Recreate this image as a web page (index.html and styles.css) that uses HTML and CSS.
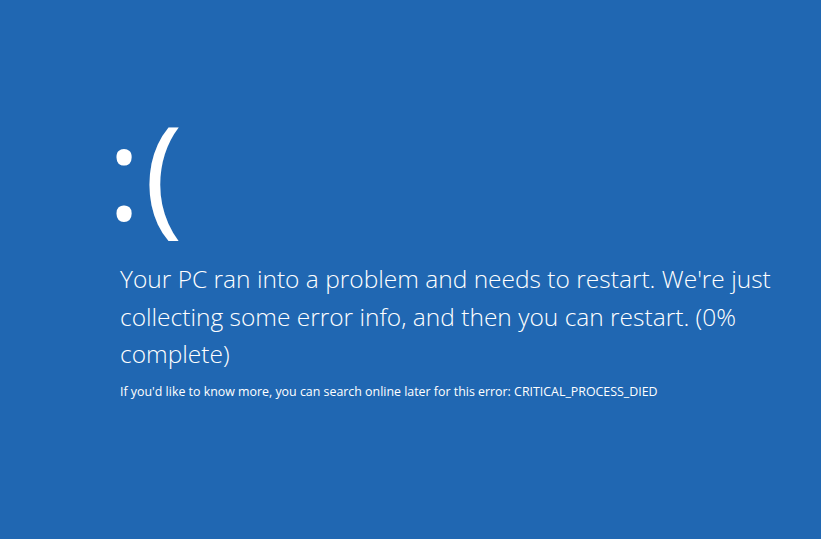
FILE: index.html
```html
<!DOCTYPE html>
<html>
<head>
    <link rel="stylesheet" href="styles.css">
</head>
<body>
    <div class="bsod">
        <div class="face">:(</div>
        <div class="message">Your PC ran into a problem and needs to restart. We're just collecting some error info, and then you can restart. (0% complete)</div>
        <div class="details">If you'd like to know more, you can search online later for this error: CRITICAL_PROCESS_DIED</div>
    </div>
</body>
</html>
```
FILE: styles.css
```css
html, body {
    margin: 0;
    height: 100%;
}
body {
    background: #2067b2;
    color: #fff;
    font-family: "Open Sans", "Noto Sans", sans-serif;
}
.bsod {
    padding: 80px 40px 0 120px;
}
.face {
    font-size: 130px;
    font-weight: 400;
    line-height: 180px;
    letter-spacing: 3px;
    margin-left: -13px;
}
.message {
    font-size: 24.5px;
    font-weight: 300;
    line-height: 37.5px;
    max-width: 680px;
}
.details {
    font-size: 12.4px;
    margin-top: 10px;
}
```
